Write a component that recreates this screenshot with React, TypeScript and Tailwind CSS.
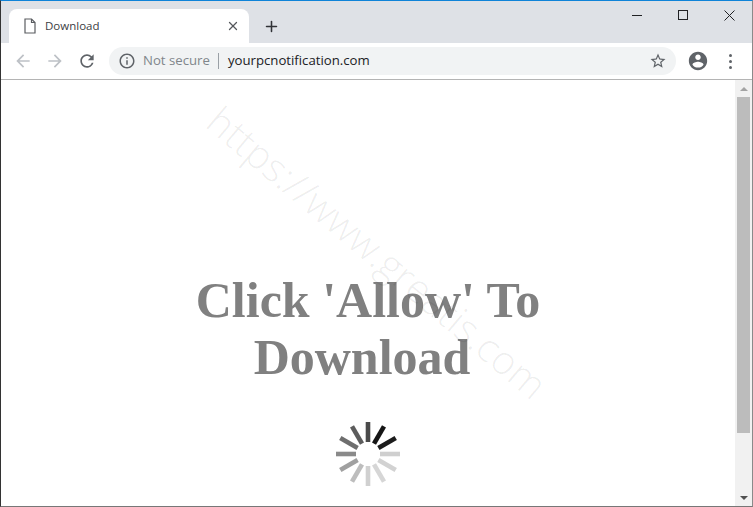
import { X, Plus } from 'lucide-react';

const SPOKES = [
  { angle: 0, color: '#4a4a4a' },
  { angle: 30, color: '#151515' },
  { angle: 60, color: '#1c1c1c' },
  { angle: 90, color: '#cfcfcf' },
  { angle: 120, color: '#d2d2d2' },
  { angle: 150, color: '#d6d6d6' },
  { angle: 180, color: '#d0d0d0' },
  { angle: 210, color: '#bdbdbd' },
  { angle: 240, color: '#a0a0a0' },
  { angle: 270, color: '#8a8a8a' },
  { angle: 300, color: '#6e6e6e' },
  { angle: 330, color: '#5c5c5c' },
];

// chrome toolbar glyphs, 24 unit box
function Glyph({ d, size, className }: { d: string; size: number; className: string }) {
  return (
    <svg width={size} height={size} viewBox="0 0 24 24" fill="currentColor" className={`shrink-0 ${className}`}>
      <path d={d} />
    </svg>
  );
}

const ARROW_BACK = 'M20 11H7.83l5.59-5.59L12 4l-8 8 8 8 1.41-1.41L7.83 13H20v-2z';
const RELOAD = 'M17.65 6.35A7.95 7.95 0 0 0 12 4c-4.42 0-7.99 3.58-7.99 8s3.57 8 7.99 8c3.73 0 6.84-2.55 7.73-6h-2.08A5.99 5.99 0 0 1 12 18c-3.31 0-6-2.69-6-6s2.69-6 6-6c1.66 0 3.14.69 4.22 1.78L13 11h7V4l-2.35 2.35z';
const INFO = 'M11 7h2v2h-2zm0 4h2v6h-2zm1-9C6.48 2 2 6.48 2 12s4.48 10 10 10 10-4.48 10-10S17.52 2 12 2zm0 18c-4.41 0-8-3.59-8-8s3.59-8 8-8 8 3.59 8 8-3.59 8-8 8z';
const STAR = 'M22 9.24l-7.19-.62L12 2 9.19 8.63 2 9.24l5.46 4.73L5.82 21 12 17.27 18.18 21l-1.63-7.03L22 9.24zM12 15.4l-3.76 2.27 1-4.28-3.32-2.88 4.38-.38L12 6.1l1.71 4.04 4.38.38-3.32 2.88 1 4.28L12 15.4z';
const AVATAR = 'M12 2C6.48 2 2 6.48 2 12s4.48 10 10 10 10-4.48 10-10S17.52 2 12 2zm0 3c1.66 0 3 1.34 3 3s-1.34 3-3 3-3-1.34-3-3 1.34-3 3-3zm0 14.2c-2.5 0-4.71-1.28-6-3.22.03-1.99 4-3.08 6-3.08 1.99 0 5.97 1.09 6 3.08-1.29 1.94-3.5 3.22-6 3.22z';

function Spinner() {
  return (
    <svg width="66" height="66" viewBox="-33 -33 66 66" className="block">
      {SPOKES.map(({ angle, color }) => (
        <rect key={angle} x="-2.3" y="-32" width="4.6" height="20" fill={color} transform={`rotate(${angle})`} />
      ))}
    </svg>
  );
}

function TabStrip() {
  return (
    <div className="flex h-[42px] shrink-0 bg-[#dee1e6] pt-[8px] pl-[8px]">
      <div className="flex h-[34px] w-[240px] items-center rounded-t-[8px] bg-white pl-[14px] pr-[9px]">
        <svg width="14" height="16" viewBox="0 0 14 16" fill="none" stroke="#5a5d61" strokeWidth="1.2" className="shrink-0">
          <path d="M2 1h6.500L12 4.500V15H2z" />
          <path d="M8.500 1v3.500H12" />
        </svg>
        <span className="ml-[8px] flex-1 font-['Open_Sans',sans-serif] text-[11.5px] text-[#3c4043]">Download</span>
        <X size={14} strokeWidth={2.2} className="text-[#55585c]" />
      </div>
      <div className="ml-[14px] flex h-[34px] items-center">
        <Plus size={17} strokeWidth={2.2} className="text-[#303236]" />
      </div>
      <div className="ml-auto -mt-[1px] flex h-[14px] items-center text-[#202124]">
        <div className="flex w-[46px] justify-center">
          <span className="h-px w-[10px] bg-[#202124]" />
        </div>
        <div className="flex w-[46px] justify-center">
          <span className="h-[10px] w-[10px] border border-[#202124]" />
        </div>
        <div className="flex w-[46px] justify-center">
          <svg width="11" height="11" viewBox="0 0 11 11" stroke="#202124" strokeWidth="1">
            <path d="M0.500 0.500l10 10M10.500 0.500l-10 10" />
          </svg>
        </div>
      </div>
    </div>
  );
}

function Toolbar() {
  return (
    <div className="flex h-[37px] shrink-0 items-center border-b border-[#b4b4b4] bg-white pl-[12px]">
      <Glyph d={ARROW_BACK} size={20} className="text-[#bdc1c6]" />
      <Glyph d={ARROW_BACK} size={20} className="ml-[12px] rotate-180 text-[#bdc1c6]" />
      <Glyph d={RELOAD} size={20} className="ml-[12px] text-[#5f6368]" />
      <div className="ml-[12px] flex h-[28px] w-[567px] items-center rounded-full bg-[#f1f3f4] pl-[9px] pr-[9px] font-['Open_Sans',sans-serif]">
        <Glyph d={INFO} size={18} className="text-[#5f6368]" />
        <span className="ml-[7px] text-[13.2px] text-[#80868b]">Not secure</span>
        <span className="mx-[8px] h-[16px] w-px bg-[#9aa0a6]" />
        <span className="ml-px text-[13.2px] text-[#202124]">yourpcnotification.com</span>
        <Glyph d={STAR} size={18} className="ml-auto text-[#5f6368]" />
      </div>
      <Glyph d={AVATAR} size={22} className="ml-[11px] text-[#5f6368]" />
      <div className="ml-[20px] flex flex-col gap-[3px]">
        <span className="h-[3px] w-[3px] rounded-full bg-[#5f6368]" />
        <span className="h-[3px] w-[3px] rounded-full bg-[#5f6368]" />
        <span className="h-[3px] w-[3px] rounded-full bg-[#5f6368]" />
      </div>
    </div>
  );
}

function Scrollbar() {
  return (
    <div className="flex w-[17px] shrink-0 flex-col items-center bg-[#f1f1f1]">
      <div className="flex h-[17px] items-center justify-center">
        <span className="h-0 w-0 border-x-[4px] border-b-[4px] border-x-transparent border-b-[#a3a3a3]" />
      </div>
      <div className="h-[336px] w-[13px] bg-[#bcbcbc]" />
      <div className="flex flex-1 items-end justify-center pb-[6px]">
        <span className="h-0 w-0 border-x-[4px] border-t-[4px] border-x-transparent border-t-[#505050]" />
      </div>
    </div>
  );
}

export default function App() {
  return (
    <div className="flex h-[507px] w-[753px] flex-col overflow-hidden border-t border-r border-b border-l border-t-[#0f83d8] border-r-[#8a8a8a] border-b-[#777777] border-l-[#333333] font-['Liberation_Sans',sans-serif]">
      <TabStrip />
      <Toolbar />
      <div className="relative flex min-h-0 flex-1">
        <main className="flex flex-1 flex-col items-center bg-white pt-[192px]">
          <h1 className="flex flex-col items-center font-['Liberation_Serif',serif] text-[50px] leading-[57px] font-bold text-[#808080]">
            <span>Click 'Allow' To</span>
            <span className="mr-[12px]">Download</span>
          </h1>
          <div className="mt-[35px]">
            <Spinner />
          </div>
        </main>
        <Scrollbar />
        {/* watermark over the page */}
        <div className="pointer-events-none absolute top-[153px] left-[156px] w-[440px] rotate-[40deg] text-center font-['Open_Sans',sans-serif] text-[39.5px] leading-none font-light whitespace-nowrap text-black/[0.07]">
          https://www.greatis.com
        </div>
      </div>
    </div>
  );
}
